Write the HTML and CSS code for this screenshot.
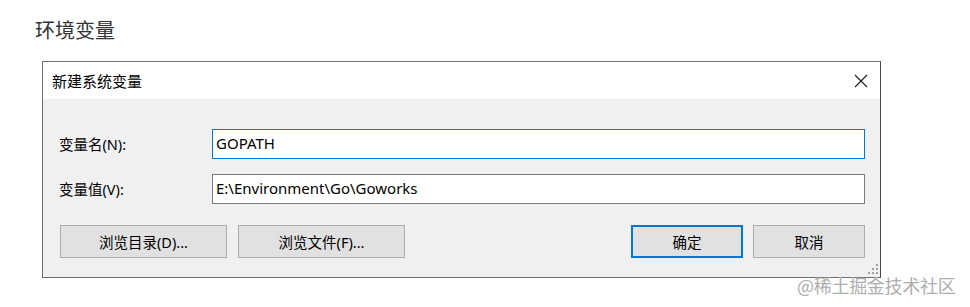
FILE: index.html
```html
<!DOCTYPE html>
<html lang="zh-CN">
<head>
<meta charset="utf-8">
<title>环境变量</title>
<link rel="stylesheet" href="styles.css">
</head>
<body>
<h1 class="page-title">环境变量</h1>
<div class="dialog">
  <div class="titlebar">
    <span class="title">新建系统变量</span>
    <svg class="close" width="14" height="14" viewBox="0 0 14 14"><path d="M1 1L13 13M13 1L1 13" stroke="#1a1a1a" stroke-width="1.1" fill="none"/></svg>
  </div>
  <div class="body">
    <div class="row">
      <span class="label">变量名(N):</span>
      <div class="input focused">GOPATH</div>
    </div>
    <div class="row second">
      <span class="label">变量值(V):</span>
      <div class="input">E:\Environment\Go\Goworks</div>
    </div>
    <div class="buttons">
      <button class="btn wide">浏览目录(D)...</button>
      <button class="btn wide">浏览文件(F)...</button>
      <span class="spacer"></span>
      <button class="btn narrow primary">确定</button>
      <button class="btn narrow">取消</button>
    </div>
    <svg class="grip" width="10" height="10" viewBox="0 0 10 10">
      <rect x="8" y="0" width="2" height="2" fill="#a0a0a0"/>
      <rect x="4" y="4" width="2" height="2" fill="#a0a0a0"/>
      <rect x="8" y="4" width="2" height="2" fill="#a0a0a0"/>
      <rect x="0" y="8" width="2" height="2" fill="#a0a0a0"/>
      <rect x="4" y="8" width="2" height="2" fill="#a0a0a0"/>
      <rect x="8" y="8" width="2" height="2" fill="#a0a0a0"/>
    </svg>
  </div>
</div>
<div class="watermark">@稀土掘金技术社区</div>
</body>
</html>
```
FILE: styles.css
```css
html, body {
  margin: 0;
  padding: 0;
  background: #ffffff;
}
body {
  position: relative;
  width: 970px;
  height: 307px;
  overflow: hidden;
  font-family: "Noto Sans", "Noto Sans CJK SC", sans-serif;
  color: #000;
}
.page-title {
  margin: 0;
  padding: 18px 0 0 35px;
  height: 24px;
  line-height: 24px;
  font-size: 20px;
  font-weight: normal;
  color: #333333;
  font-family: "Noto Sans CJK SC", sans-serif;
}
.dialog {
  margin: 19px 0 0 42px;
  width: 837px;
  border: 1px solid #6f6f6f;
  border-right-color: #3d4b5a;
  background: #f0f0f0;
}
.titlebar {
  height: 37px;
  background: #ffffff;
  display: flex;
  align-items: center;
  justify-content: space-between;
  padding: 0 12px 0 9px;
}
.title {
  font-size: 15px;
  font-family: "Noto Sans CJK SC", sans-serif;
  line-height: 20px;
  color: #000;
}
.close {
  display: block;
}
.body {
  position: relative;
  padding: 30px 15px 19px 16px;
}
.row {
  display: flex;
  align-items: center;
  height: 30px;
}
.row.second {
  margin-top: 15px;
}
.label {
  width: 153px;
  font-size: 14.5px;
  line-height: 20px;
}
.input {
  flex: 1;
  box-sizing: border-box;
  height: 30px;
  border: 1px solid #7a7a7a;
  background: #ffffff;
  padding: 0 3px;
  font-size: 15px;
  line-height: 27px;
  white-space: nowrap;
}
.input.focused {
  border-color: #0078d7;
}
.buttons {
  display: flex;
  margin-top: 21px;
  padding-left: 1px;
  gap: 11px;
}
.spacer {
  flex: 1;
}
.btn {
  box-sizing: border-box;
  height: 33px;
  border: 1px solid #adadad;
  background: #e1e1e1;
  font-family: "Noto Sans", "Noto Sans CJK SC", sans-serif;
  font-size: 14.5px;
  color: #000;
  padding: 0;
  margin: 0;
}
.btn.wide {
  width: 167px;
}
.btn.narrow {
  width: 112px;
}
.btn.primary {
  border: 2px solid #0078d7;
  margin-right: -1px;
}
.grip {
  position: absolute;
  right: 2px;
  bottom: 3px;
}
.watermark {
  position: absolute;
  left: 797px;
  top: 273px;
  font-family: "Noto Sans CJK SC", sans-serif;
  font-size: 18px;
  line-height: 24px;
  color: #aeaeae;
  letter-spacing: -0.3px;
  text-shadow: 0 0 1px #ffffff;
}
```
